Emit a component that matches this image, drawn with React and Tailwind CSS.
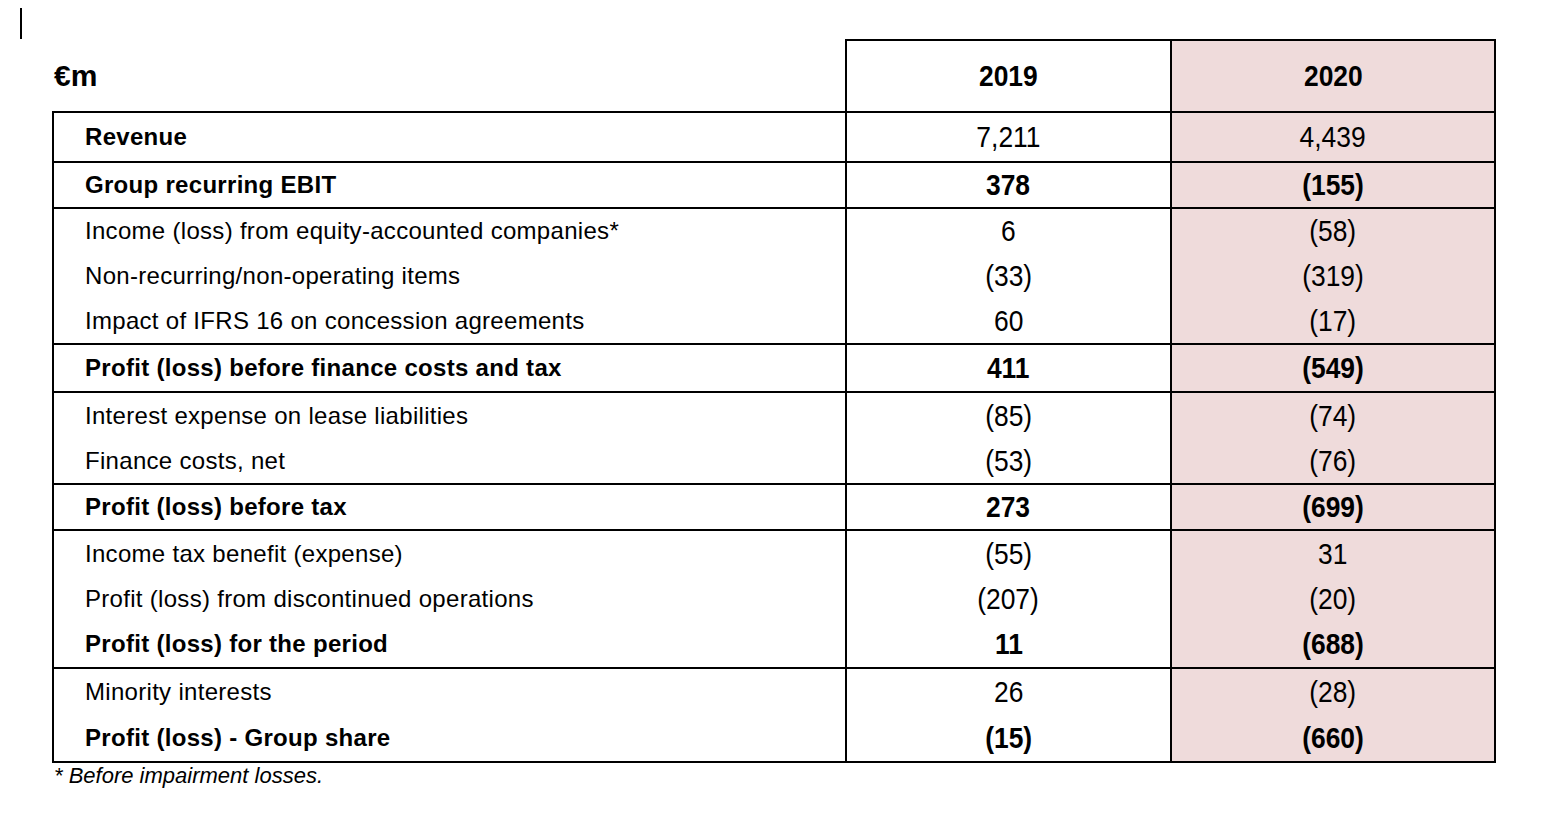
const sections = [
  { h: 48, rows: [{ label: 'Revenue', bold: true, numBold: false, a: '7,211', b: '4,439' }] },
  { h: 44, rows: [{ label: 'Group recurring EBIT', bold: true, numBold: true, a: '378', b: '(155)' }] },
  {
    h: 134,
    rows: [
      { label: 'Income (loss) from equity-accounted companies*', a: '6', b: '(58)' },
      { label: 'Non-recurring/non-operating items', a: '(33)', b: '(319)' },
      { label: 'Impact of IFRS 16 on concession agreements', a: '60', b: '(17)' },
    ],
  },
  { h: 46, rows: [{ label: 'Profit (loss) before finance costs and tax', bold: true, numBold: true, a: '411', b: '(549)' }] },
  {
    h: 90,
    rows: [
      { label: 'Interest expense on lease liabilities', a: '(85)', b: '(74)' },
      { label: 'Finance costs, net', a: '(53)', b: '(76)' },
    ],
  },
  { h: 44, rows: [{ label: 'Profit (loss) before tax', bold: true, numBold: true, a: '273', b: '(699)' }] },
  {
    h: 136,
    rows: [
      { label: 'Income tax benefit (expense)', a: '(55)', b: '31' },
      { label: 'Profit (loss) from discontinued operations', a: '(207)', b: '(20)' },
      { label: 'Profit (loss) for the period', bold: true, numBold: true, a: '11', b: '(688)' },
    ],
  },
  {
    h: 92,
    rows: [
      { label: 'Minority interests', a: '26', b: '(28)' },
      { label: 'Profit (loss) - Group share', bold: true, numBold: true, a: '(15)', b: '(660)' },
    ],
  },
];

// numbers in the source are a narrow face: scale Liberation Sans horizontally
function Num({ children, bold }) {
  return (
    <span className={`inline-block scale-x-[0.88] text-[30px] leading-none ${bold ? 'font-bold' : 'font-normal'}`}>
      {children}
    </span>
  );
}

function Cell({ rows, h, field, className }) {
  return (
    <div className={`flex flex-col ${className}`} style={{ height: h }}>
      {rows.map((r, i) =>
        field === 'label' ? (
          <div key={i} className={`flex-1 flex items-center pl-[31px] text-[24px] tracking-[0.3px] ${r.bold ? 'font-bold' : 'font-normal'}`}>
            {r.label}
          </div>
        ) : (
          <div key={i} className="flex-1 flex items-center justify-center">
            <Num bold={r.numBold}>{r[field]}</Num>
          </div>
        )
      )}
    </div>
  );
}

export default function App() {
  return (
    <div className="min-h-[816px] w-[1556px] bg-white text-black" style={{ fontFamily: '"Liberation Sans", Arial, sans-serif' }}>
      <div className="pt-[8px] pl-[20px]">
        <div className="w-[2px] h-[31px] bg-black" />
      </div>

      <div className="ml-[52px] w-[1444px]">
        {/* header */}
        <div className="flex h-[72px]">
          <div className="w-[793px] flex items-center pl-[2px] text-[30px] font-bold">€m</div>
          <div className="w-[325px] border-l-2 border-t-2 border-black flex items-center justify-center">
            <Num bold>2019</Num>
          </div>
          <div className="flex-1 border-l-2 border-t-2 border-r-2 border-black bg-[#efdbdb] flex items-center justify-center">
            <Num bold>2020</Num>
          </div>
        </div>

        {/* body */}
        <div className="border-2 border-black">
          {sections.map((s, i) => (
            <div key={i} className={`flex ${i > 0 ? 'border-t-2 border-black' : ''}`}>
              <Cell rows={s.rows} h={s.h} field="label" className="w-[791px]" />
              <Cell rows={s.rows} h={s.h} field="a" className="w-[325px] border-l-2 border-black" />
              <Cell rows={s.rows} h={s.h} field="b" className="flex-1 border-l-2 border-black bg-[#efdbdb]" />
            </div>
          ))}
        </div>

        <p className="pl-[2px] text-[22px] italic leading-[26px]">* Before impairment losses.</p>
      </div>
    </div>
  );
}
